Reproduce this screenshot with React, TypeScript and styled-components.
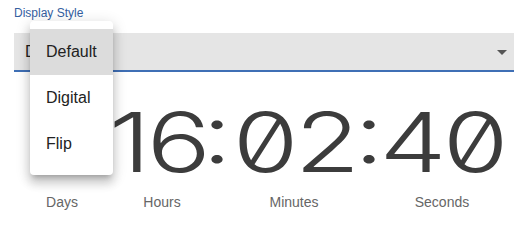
import React from 'react'
import styled, { createGlobalStyle } from 'styled-components'

const GlobalStyle = createGlobalStyle`
  html, body {
    margin: 0;
    padding: 0;
    background: #ffffff;
  }
  body {
    font-family: 'Liberation Sans', Arial, sans-serif;
  }
`

const STYLES = ['Default', 'Digital', 'Flip']

const UNITS = [
  { label: 'Days', value: '', nudge: 0 },
  { label: 'Hours', value: '16', nudge: 8 },
  { label: 'Minutes', value: '02', nudge: 0 },
  { label: 'Seconds', value: '40', nudge: 0 },
]

export default function App() {
  return (
    <Page>
      <GlobalStyle />
      <FieldLabel>Display Style</FieldLabel>
      <SelectBox>
        <SelectValue>Default</SelectValue>
        <svg width="24" height="24" viewBox="0 0 24 24">
          <path d="M7 10l5 5 5-5z" fill="#555" />
        </svg>
      </SelectBox>

      <Clock>
        {UNITS.map((u, i) => (
          <React.Fragment key={u.label}>
            {i > 0 && (
              <Value>
                <span>{i > 1 ? ':' : ''}</span>
              </Value>
            )}
            <Value>
              <span>{u.value}</span>
            </Value>
          </React.Fragment>
        ))}
        {UNITS.map((u, i) => (
          <React.Fragment key={u.label + '-l'}>
            {i > 0 && <span />}
            <UnitLabel nudge={u.nudge}>{u.label}</UnitLabel>
          </React.Fragment>
        ))}
      </Clock>

      <Menu>
        {STYLES.map((s) => (
          <MenuItem key={s} selected={s === 'Default'}>
            {s}
          </MenuItem>
        ))}
      </Menu>
    </Page>
  )
}

const Page = styled.div`
  position: relative;
  width: 520px;
  height: 228px;
  padding: 6px 6px 0 14px;
  box-sizing: border-box;
  overflow: hidden;
`

const FieldLabel = styled.div`
  font-size: 12px;
  line-height: 14px;
  color: #35609f;
  margin-bottom: 13px;
`

const SelectBox = styled.div`
  height: 37px;
  display: flex;
  align-items: center;
  justify-content: space-between;
  padding-left: 11px;
  background: #e5e5e5;
  border-bottom: 2px solid #3f6fb5;
  svg {
    display: block;
  }
`

const SelectValue = styled.span`
  font-size: 16px;
  color: #222222;
`

const Clock = styled.div`
  display: grid;
  grid-template-columns: 76px 13px 90px 24px 134px 12px 138px;
  grid-template-rows: 82px 16px;
  row-gap: 10px;
  margin-top: 30px;
  margin-left: 10px;
  justify-items: center;
`

const Value = styled.div`
  font-family: Inter, 'Liberation Sans', sans-serif;
  font-weight: 300;
  font-size: 82px;
  line-height: 82px;
  color: #3c3c3c;
  font-feature-settings: 'zero' 1, 'case' 1;
  letter-spacing: -3px;
  white-space: nowrap;
  span {
    display: inline-block;
    transform: scaleX(1.3);
  }
`

const UnitLabel = styled.div<{ nudge: number }>`
  font-size: 14px;
  line-height: 16px;
  color: #666666;
  white-space: nowrap;
  padding-left: ${(p) => p.nudge}px;
`

const Menu = styled.ul`
  position: absolute;
  top: 21px;
  left: 30px;
  width: 83px;
  margin: 0;
  padding: 8px 0;
  list-style: none;
  background: #ffffff;
  border-radius: 4px;
  box-shadow: 0 5px 5px -3px rgba(0, 0, 0, 0.2), 0 8px 10px 1px rgba(0, 0, 0, 0.14),
    0 3px 14px 2px rgba(0, 0, 0, 0.12);
`

const MenuItem = styled.li<{ selected?: boolean }>`
  height: 46px;
  line-height: 46px;
  padding: 0 16px;
  font-size: 16px;
  color: #222222;
  background: ${(p) => (p.selected ? '#dcdcdc' : 'transparent')};
`
